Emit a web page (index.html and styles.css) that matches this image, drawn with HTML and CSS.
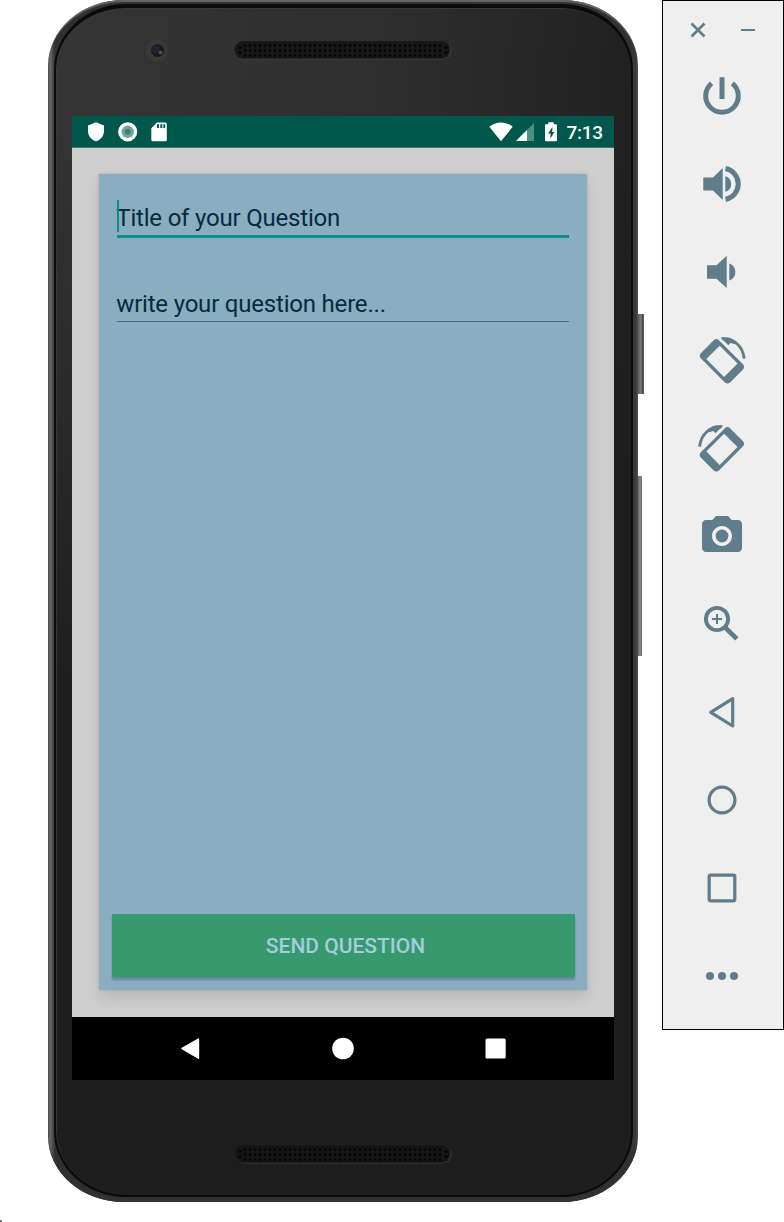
FILE: index.html
```html
<!DOCTYPE html>
<html lang="en">
<head>
<meta charset="utf-8">
<title>Android Emulator</title>
<link rel="stylesheet" href="styles.css">
</head>
<body>
<main class="stage">
  <section class="phone">
    <span class="side-button power-key"></span>
    <span class="side-button volume-key"></span>
    <div class="bezel">
      <header class="forehead">
        <svg class="camera" width="24" height="24" viewBox="0 0 24 24"><circle cx="12" cy="11.500" r="11.300" fill="#3a3839"/><circle cx="12.500" cy="11.500" r="6.500" fill="#1d1a20"/><circle cx="11" cy="10.500" r="3.500" fill="#242434"/><circle cx="15.500" cy="13.500" r="1.800" fill="#70484a"/></svg>
        <svg class="grille" width="218" height="20" viewBox="0 0 218 20">
          <defs><pattern id="holes" x="9" y="3.500" width="5" height="5" patternUnits="userSpaceOnUse"><circle cx="2" cy="2" r="1.500" fill="#030303"/></pattern></defs>
          <rect x="1" y="1.500" width="216.500" height="18" rx="9" fill="#424242"/><rect x="0.500" y="1" width="216" height="17.800" rx="8.900" fill="#181818"/><rect x="9" y="3" width="200" height="14.500" fill="url(#holes)"/><g fill="#030303"><circle cx="6" cy="7.500" r="1.500"/><circle cx="6" cy="12.500" r="1.500"/><circle cx="212" cy="7.500" r="1.500"/><circle cx="212" cy="12.500" r="1.500"/></g>
        </svg>
      </header>
      <div class="screen">
        <div class="status">
          <div class="status-group left">
            <svg width="16" height="20" viewBox="0 0 16 20"><path d="M8 .3 16 3.500V9c0 5-3.400 8.800-8 10.300C3.400 17.800 0 14 0 9V3.500z" fill="#fff"/></svg>
            <svg width="20" height="20" viewBox="0 0 20 20"><circle cx="9.700" cy="9.800" r="9.600" fill="#fff"/><circle cx="9.700" cy="9.800" r="6.200" fill="#72a69d"/><circle cx="9.700" cy="9.800" r="3" fill="#3c8377"/></svg>
            <svg width="16" height="20" viewBox="0 0 16 20"><path d="M6 .5h8.200a1.600 1.600 0 0 1 1.600 1.600v15.600a1.600 1.600 0 0 1-1.600 1.600H1.900a1.600 1.600 0 0 1-1.600-1.600V6.200z" fill="#fff"/><path d="M6 2.300h2v3.700H6zM9.300 2.300h2v3.700h-2zM12.400 2.300h1.800v3.700h-1.800z" fill="#00574b"/></svg>
          </div>
          <div class="status-group right">
            <svg width="24" height="20" viewBox="0 0 24 20"><path d="M12 19.300.3 4.800C3.500 2 7.500.4 12 .4S20.500 2 23.700 4.800z" fill="#fff"/></svg>
            <svg width="18" height="20" viewBox="0 0 18 20"><path d="M18 1v18H0z" fill="#4f8c82"/><path d="M11 8v11H0z" fill="#fff"/></svg>
            <svg class="battery" width="12" height="20" viewBox="0 0 12 20"><path d="M3.300.3h5.400v1.900H11a1 1 0 0 1 1 1v15a1 1 0 0 1-1 1H1a1 1 0 0 1-1-1v-15a1 1 0 0 1 1-1h2.300z" fill="#fff"/><path d="M7.500 5 3 11.600h2.500v5L9.300 10H7.200z" fill="#00574b"/></svg>
            <span class="clock">7:13</span>
          </div>
        </div>
        <div class="content">
          <form class="card">
            <div class="field active"><span class="caret"></span><span class="label">Title of your Question</span></div>
            <div class="field"><span class="label">write your question here...</span></div>
            <button class="send" type="button">SEND QUESTION</button>
          </form>
        </div>
        <nav class="nav">
          <svg width="24" height="24" viewBox="0 0 24 24"><path d="M2.800 10.700 19 1.500q1.200-.6 1.200.8V21q0 1.400-1.200.7L2.800 12.300q-1.200-.8 0-1.600z" fill="#fff"/></svg>
          <svg width="24" height="24" viewBox="0 0 24 24"><circle cx="12" cy="11.500" r="10.800" fill="#fff"/></svg>
          <svg width="24" height="24" viewBox="0 0 24 24"><rect x="1.500" y="1.500" width="20.200" height="20" rx="1.500" fill="#fff"/></svg>
        </nav>
      </div>
      <footer class="chin">
        <svg class="grille" width="218" height="20" viewBox="0 0 218 20">
          <rect x="1" y="1.500" width="216.500" height="18" rx="9" fill="#3a3a3a"/><rect x="0.500" y="1" width="216" height="17.800" rx="8.900" fill="#151515"/><rect x="9" y="3" width="200" height="14.500" fill="url(#holes)"/><g fill="#030303"><circle cx="6" cy="7.500" r="1.500"/><circle cx="6" cy="12.500" r="1.500"/><circle cx="212" cy="7.500" r="1.500"/><circle cx="212" cy="12.500" r="1.500"/></g>
        </svg>
      </footer>
    </div>
  </section>
  <aside class="toolbar">
    <div class="window-controls">
      <svg width="16" height="16" viewBox="0 0 16 16"><path d="m1.500 1.500 13 13m0-13-13 13" class="line" stroke-width="2.600"/></svg>
      <svg width="16" height="16" viewBox="0 0 16 16"><path d="M1 8h14" class="line" stroke-width="2"/></svg>
    </div>
    <div class="tools">
      <svg class="tool" viewBox="0 0 48 48"><path class="line" stroke-width="5" d="M13.600 11.400a16.300 16.300 0 1 0 20.800 0M24 5.200v21.800"/></svg>
      <svg class="tool" viewBox="0 0 48 48"><path d="M5.300 17.500H15L24.700 8v32L15 30.500H5.300zM27.300 16a8.400 8.400 0 0 1 0 16z"/><path class="line" stroke-width="5" d="M27.500 8.500a15.800 15.800 0 0 1 0 31"/></svg>
      <svg class="tool" viewBox="0 0 48 48"><path d="M9 17.300h9.500L28.700 7.700V40L18.500 30.700H9zM31.300 15.500a9 9 0 0 1 0 17z"/></svg>
      <svg class="tool" viewBox="0 0 48 48"><use href="#rotate"/></svg>
      <svg class="tool" viewBox="0 0 48 48">
        <defs><g id="rotate"><path fill-rule="evenodd" transform="translate(23.900 25.300) rotate(-45)" d="M-8.800-20.700H8.800a4 4 0 0 1 4 4V16.700a4 4 0 0 1-4 4H-8.800a4 4 0 0 1-4-4V-16.700a4 4 0 0 1 4-4zM-9.500-12.600V12.600H9.500V-12.600z"/><path class="line" stroke-width="2.900" d="M24 2.800C35 2 44.800 9.500 46.200 22.700"/><path d="m22.500 1.400 7.800 7.900 2.200-2.200 4.500 1.100 1.500-3-7-3.500z"/></g></defs>
        <use href="#rotate" transform="translate(47.800 0) scale(-1 1)"/>
      </svg>
      <svg class="tool" viewBox="0 0 24 24"><circle cx="12" cy="12" r="3.200"/><path d="M9 2 7.170 4H4c-1.100 0-2 .9-2 2v12c0 1.100.9 2 2 2h16c1.100 0 2-.9 2-2V6c0-1.100-.9-2-2-2h-3.170L15 2H9zm3 15c-2.760 0-5-2.240-5-5s2.240-5 5-5 5 2.240 5 5-2.240 5-5 5z"/></svg>
      <svg class="tool" viewBox="0 0 48 48"><circle class="line" cx="19" cy="19" r="11.100" stroke-width="3.900"/><path class="line" stroke-width="2" d="M14 19h10M19 14v10"/><path class="line" stroke-width="4.800" d="m27.300 27.600 11.500 11.300"/></svg>
      <svg class="tool" viewBox="0 0 48 48"><path class="line" stroke-width="3.200" stroke-linejoin="round" d="M12.700 24.300 34.700 10.600V38z"/></svg>
      <svg class="tool" viewBox="0 0 48 48"><circle class="line" cx="24" cy="24" r="12.900" stroke-width="3.200"/></svg>
      <svg class="tool" viewBox="0 0 48 48"><rect class="line" x="11.200" y="11.200" width="25.600" height="25.600" rx="1.200" stroke-width="3.200"/></svg>
      <svg class="tool" viewBox="0 0 48 48"><circle cx="12" cy="24" r="4"/><circle cx="24" cy="24" r="4"/><circle cx="36" cy="24" r="4"/></svg>
    </div>
  </aside>
  <span class="desktop-mark"></span>
</main>
</body>
</html>
```
FILE: styles.css
```css
* { box-sizing: border-box; }
body { margin: 0; background: #fff; font-family: Roboto, sans-serif; }
svg { display: block; flex: none; }

.stage {
  position: relative;
  display: flex;
  align-items: flex-start;
  justify-content: space-between;
  width: 784px;
  height: 1222px;
  padding-left: 48px;
  overflow: hidden;
}

/* Handset */
.phone {
  position: relative;
  width: 590px;
  height: 1202px;
  padding: 4px 5px 5px 6px;
  border-radius: 76px / 66px;
  background: linear-gradient(90deg, #4a4a4a 0, #696969 2px, #555 4px, #303030 7px, #323031 582px, #3b393a 588px, #555 590px);
  box-shadow: inset 0 3px 1px -1px #666, inset 0 -5px 2px -1px #333;
}
.bezel {
  display: flex;
  flex-direction: column;
  width: 579px;
  height: 1193px;
  padding: 2px;
  border: 2px solid #0b0b0b;
  border-top-width: 4px;
  border-radius: 72px / 66px;
  background: linear-gradient(180deg, rgba(30, 30, 30, 0) 110px, #1e1e1e 700px),
    linear-gradient(95deg, #353536 0, #2f2f2f 45%, #232323 80%, #1c1c1c 100%);
  box-shadow: inset 1px 1px 1px #3a3a3a;
}
.side-button {
  position: absolute;
  background: linear-gradient(90deg, #555, #777 40%, #696969 65%, #333 80%, #777);
}
.power-key { left: 590px; top: 314px; width: 6px; height: 80px; }
.volume-key { left: 590px; top: 476px; width: 4px; height: 180px; background: linear-gradient(90deg, #5a5a5a, #888 45%, #707070); }
.forehead { display: flex; align-items: flex-start; height: 106px; padding: 29px 0 0 87px; }
.forehead .grille { margin: 1px 0 0 65px; }
.chin { display: flex; height: 110px; padding: 64px 0 0 176px; }

/* Screen */
.screen {
  display: flex;
  flex-direction: column;
  width: 542px;
  height: 964px;
  margin-left: 14px;
  background: #cecece;
}
.status {
  display: flex;
  justify-content: space-between;
  height: 32px;
  padding: 6px 10px 0 16px;
  background: #00574b;
  border-bottom: 1px solid #33776e;
}
.status-group { display: flex; align-items: flex-start; }
.left { gap: 13.500px; }
.right { gap: 3px; }
.battery { margin-left: 8px; }
.clock { width: 38px; margin-left: 6px; padding-left: .500px; color: #fff; font-size: 19px; font-weight: 500; line-height: 21px; letter-spacing: -.3px; }
.content { flex: 1; padding: 26px 27px 27px; }
.card {
  display: flex;
  flex-direction: column;
  height: 816px;
  padding: 25px 12.500px 13px;
  background: #8badc0;
  box-shadow: 0 8px 14px rgba(0, 0, 0, .1), 0 0 3px rgba(0, 0, 0, .14);
}
.field {
  position: relative;
  height: 62px;
  margin: 0 5.500px 24px;
  padding-top: 5px;
  color: #052b40;
  font-size: 24px;
  line-height: 28px;
  letter-spacing: -.2px;
}
.field::after { content: ""; display: block; margin-top: 3px; height: 1.300px; background: #456a7e; }
.field.active::after { height: 3px; margin-top: 2.500px; background: #078c92; }
.label { display: block; margin-left: -.7px; white-space: nowrap; }
.caret { position: absolute; left: 0; top: 1px; width: 2px; height: 32px; background: #078c92; }
.send {
  margin: auto 0 0;
  height: 63px;
  padding: 0 0 0 5px;
  border: 0;
  background: #369a6e;
  box-shadow: 0 3px 2px rgba(40, 70, 100, .38);
  color: #a6cbdc;
  font: 500 21px/64px Roboto, sans-serif;
}
.nav { display: flex; justify-content: center; gap: 128.500px; height: 63px; padding-top: 20px; background: #000; }

/* Emulator controls */
.toolbar { width: 122px; height: 1030px; border: 1px solid #000; background: #efefef; }
.window-controls { display: flex; justify-content: space-between; height: 71px; padding: 21px 27px 0; }
.tools { display: flex; flex-direction: column; gap: 40px; padding-left: 35px; }
.tool { width: 48px; height: 48px; fill: #607d8b; overflow: visible; }
.line { fill: none; stroke: #607d8b; }
.desktop-mark { position: absolute; left: 0; bottom: 0; width: 2px; height: 2px; background: #777; }
```
